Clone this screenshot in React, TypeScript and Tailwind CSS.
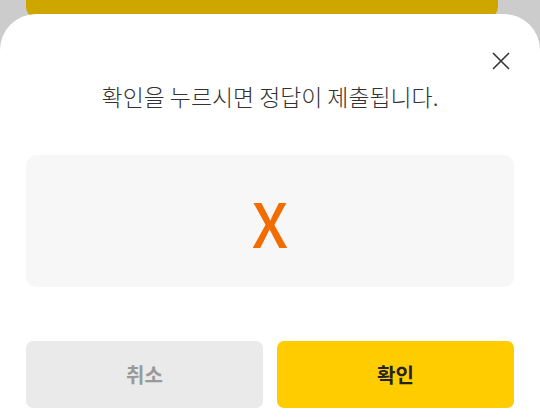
export default function App() {
    return (
        <div
            className="relative h-[419px] w-[540px] overflow-hidden bg-[#cccccc]"
            style={{ fontFamily: '"Noto Sans CJK KR", "Noto Sans", sans-serif' }}
        >
            {/* page content behind the dimmed backdrop */}
            <div className="absolute left-[26px] top-[-40px] h-[60px] w-[472px] rounded-[14px] bg-[#cfa600]" />

            <div className="relative mt-[14px] flex h-[405px] flex-col rounded-t-[36px] bg-white px-[26px]">
                <div className="flex justify-end pt-[38px] pr-[4px]">
                    <button className="flex h-[18px] w-[18px] items-center justify-center text-[#333333]">
                        <svg width="18" height="18" viewBox="0 0 18 18" fill="none" stroke="currentColor" strokeWidth="1.6">
                            <path d="M1 1L17 17M17 1L1 17" />
                        </svg>
                    </button>
                </div>

                <p className="mt-[9px] text-center text-[22.9px] font-light leading-[34px] text-[#333333]">
                    확인을 누르시면 정답이 제출됩니다.
                </p>

                <div className="mt-[42px] flex h-[132px] items-center justify-center rounded-[10px] bg-[#f7f7f7]">
                    <span className="text-[61px] font-medium leading-none text-[#f26c00]">X</span>
                </div>

                <div className="mt-[54px] flex gap-[14px]">
                    <button className="flex h-[67px] flex-1 items-center justify-center rounded-[7px] bg-[#eaeaea] text-[20px] font-bold text-[#999999]">
                        취소
                    </button>
                    <button className="flex h-[67px] flex-1 items-center justify-center rounded-[7px] bg-[#ffcc00] text-[20px] font-bold text-[#222222]">
                        확인
                    </button>
                </div>
            </div>
        </div>
    );
}
